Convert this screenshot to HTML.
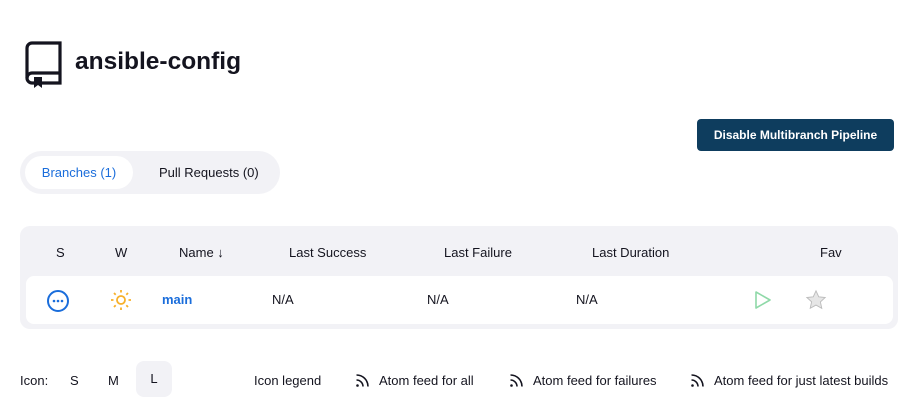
<!DOCTYPE html>
<html><head><style>
*{margin:0;padding:0;box-sizing:border-box}
body{width:912px;height:415px;background:#fff;font-family:"Liberation Sans",sans-serif;color:#14141f;position:relative;overflow:hidden;font-size:13px}
.a{position:absolute;white-space:nowrap}
</style></head><body>
<svg class="a" style="left:25px;top:41px" width="38" height="48" viewBox="0 0 38 48" fill="none" stroke="#14141f" stroke-width="3.2">
<path d="M7 2H35V42H17M9 42H7A5 5 0 0 1 2 37V7A5 5 0 0 1 7 2"/><path d="M2 37A5 5 0 0 1 7 32H35"/>
<path d="M9 36H17V47L13 44L9 47Z" fill="#14141f" stroke="none"/></svg>
<div class="a" style="left:75px;top:48px;font-size:24.5px;font-weight:bold">ansible-config</div>
<div class="a" style="left:697px;top:119px;width:197px;height:32px;background:#0e3d5e;border-radius:4px;color:#fff;font-weight:bold;font-size:12px;line-height:32px;text-align:center">Disable Multibranch Pipeline</div>
<div class="a" style="left:20px;top:151px;width:260px;height:43px;background:#f2f2f6;border-radius:22px"></div>
<div class="a" style="left:25px;top:156px;width:108px;height:33px;background:#fff;border-radius:17px;color:#1a6ddb;line-height:33px;text-align:center">Branches (1)</div>
<div class="a" style="left:159px;top:156px;line-height:33px">Pull Requests (0)</div>
<div class="a" style="left:20px;top:226px;width:878px;height:103px;background:#f2f2f6;border-radius:10px"></div>
<div class="a" style="left:26px;top:276px;width:867px;height:48px;background:#fff;border-radius:8px"></div>
<div class="a" style="left:56px;top:245px">S</div>
<div class="a" style="left:115px;top:245px">W</div>
<div class="a" style="left:179px;top:245px">Name ↓</div>
<div class="a" style="left:289px;top:245px">Last Success</div>
<div class="a" style="left:444px;top:245px">Last Failure</div>
<div class="a" style="left:592px;top:245px">Last Duration</div>
<div class="a" style="left:820px;top:245px">Fav</div>
<svg class="a" style="left:46px;top:289px" width="24" height="24" viewBox="0 0 24 24"><circle cx="12" cy="12" r="10" fill="none" stroke="#1a6ddb" stroke-width="2"/><circle cx="8" cy="12" r="1.3" fill="#1a6ddb"/><circle cx="12" cy="12" r="1.3" fill="#1a6ddb"/><circle cx="16" cy="12" r="1.3" fill="#1a6ddb"/></svg>
<svg class="a" style="left:110px;top:289px" width="22" height="22" viewBox="0 0 22 22" stroke="#f7b02a" stroke-width="1.8" fill="none"><circle cx="11" cy="11" r="4"/><path d="M11 1v2.5M11 18.5V21M1 11h2.5M18.5 11H21M4 4l1.7 1.7M16.3 16.3L18 18M4 18l1.7-1.7M16.3 5.7L18 4"/></svg>
<div class="a" style="left:162px;top:292px;color:#1a6ddb;font-weight:bold">main</div>
<div class="a" style="left:272px;top:292px">N/A</div>
<div class="a" style="left:427px;top:292px">N/A</div>
<div class="a" style="left:576px;top:292px">N/A</div>
<svg class="a" style="left:754px;top:290px" width="18" height="20" viewBox="0 0 18 20"><path d="M2 2L16 10L2 18Z" fill="none" stroke="#8fd9a8" stroke-width="1.6" stroke-linejoin="round"/></svg>
<svg class="a" style="left:805px;top:289px" width="22" height="22" viewBox="0 0 24 24"><path d="M12 2l3 6.5 7 .8-5.2 4.8 1.5 7L12 17.5 5.7 21l1.5-7L2 9.3l7-.8z" fill="#e6e6e6" stroke="#bbb" stroke-width="1"/></svg>
<div class="a" style="left:20px;top:373px">Icon:</div>
<div class="a" style="left:70px;top:373px">S</div>
<div class="a" style="left:108px;top:373px">M</div>
<div class="a" style="left:136px;top:361px;width:36px;height:36px;background:#f2f2f6;border-radius:8px;text-align:center;line-height:36px">L</div>
<div class="a" style="left:254px;top:373px">Icon legend</div>
<svg class="a" style="left:355px;top:373px" width="15" height="15" viewBox="0 0 15 15" fill="none" stroke="#14141f" stroke-width="1.6"><circle cx="2.5" cy="12.5" r="1.3" fill="#14141f" stroke="none"/><path d="M1.5 7a6.5 6.5 0 0 1 6.5 6.5M1.5 2a11.5 11.5 0 0 1 11.5 11.5"/></svg>
<div class="a" style="left:379px;top:373px">Atom feed for all</div>
<svg class="a" style="left:509px;top:373px" width="15" height="15" viewBox="0 0 15 15" fill="none" stroke="#14141f" stroke-width="1.6"><circle cx="2.5" cy="12.5" r="1.3" fill="#14141f" stroke="none"/><path d="M1.5 7a6.5 6.5 0 0 1 6.5 6.5M1.5 2a11.5 11.5 0 0 1 11.5 11.5"/></svg>
<div class="a" style="left:533px;top:373px">Atom feed for failures</div>
<svg class="a" style="left:690px;top:373px" width="15" height="15" viewBox="0 0 15 15" fill="none" stroke="#14141f" stroke-width="1.6"><circle cx="2.5" cy="12.5" r="1.3" fill="#14141f" stroke="none"/><path d="M1.5 7a6.5 6.5 0 0 1 6.5 6.5M1.5 2a11.5 11.5 0 0 1 11.5 11.5"/></svg>
<div class="a" style="left:714px;top:373px">Atom feed for just latest builds</div>
</body></html>
